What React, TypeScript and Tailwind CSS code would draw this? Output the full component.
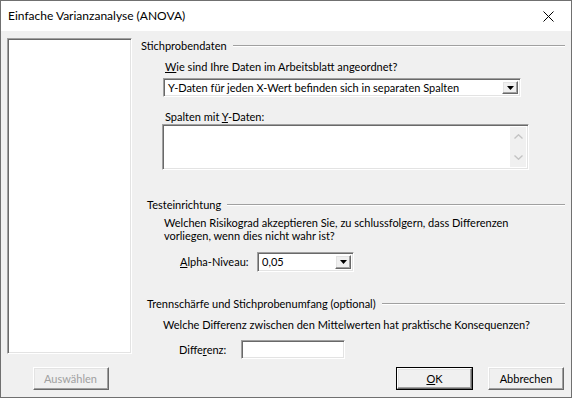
import React from "react";

const sunken =
  "border border-t-[#a0a0a0] border-l-[#a0a0a0] border-r-white border-b-white shadow-[inset_1px_1px_0_#696969,inset_-1px_-1px_0_#e3e3e3]";

const raised =
  "border border-t-white border-l-white border-r-[#696969] border-b-[#696969] shadow-[inset_-1px_-1px_0_#a0a0a0,inset_1px_1px_0_#e3e3e3]";

const GroupHeader = ({ title, className = "" }: { title: string; className?: string }) => (
  <div className={`flex items-center h-[16px] ${className}`}>
    <span className="whitespace-nowrap">{title}</span>
    <div className="flex-1 ml-[6px] border-t border-t-[#a0a0a0] border-b border-b-white" />
  </div>
);

const DropArrow = () => (
  <div className={`w-[16px] h-full bg-[#f0f0f0] flex items-center justify-center ${raised}`}>
    <svg width="7" height="4" viewBox="0 0 7 4">
      <path d="M0 0h7L3.5 4z" fill="#000" />
    </svg>
  </div>
);

const Combo = ({ value, className = "" }: { value: string; className?: string }) => (
  <div className={`flex items-stretch bg-white p-[2px] ${sunken} ${className}`}>
    <div className="flex-1 flex items-center pl-[2px] whitespace-nowrap overflow-hidden">{value}</div>
    <DropArrow />
  </div>
);

export default function App() {
  return (
    <div
      className="w-[572px] h-[398px] border border-[#707070] flex flex-col text-[11px] leading-[14px] text-black"
      style={{ fontFamily: "Lato, 'Noto Sans', sans-serif" }}
    >
      {/* title bar */}
      <div className="h-[30px] bg-white flex items-center justify-between shrink-0">
        <span className="pl-[7px] text-[12px]">Einfache Varianzanalyse (ANOVA)</span>
        <div className="w-[46px] h-full flex items-center justify-center">
          <svg width="11" height="11" viewBox="0 0 11 11">
            <path d="M0.5 0.5L10.5 10.5M10.5 0.5L0.5 10.5" stroke="#000" strokeWidth="1" />
          </svg>
        </div>
      </div>

      <div className="flex-1 bg-[#f0f0f0] flex">
        {/* left column */}
        <div className="w-[134px] pl-[6px] pt-[7px] flex flex-col">
          <div className={`w-[125px] h-[316px] bg-white ${sunken}`} />
          <div className="flex justify-center mt-[13px] pr-[1px]">
            <div className={`w-[76px] h-[23px] flex items-center justify-center text-[#a0a0a0] ${raised}`}>
              Auswählen
            </div>
          </div>
        </div>

        {/* right column */}
        <div className="flex-1 pl-[6px] pr-[6px] pt-[7px] flex flex-col">
          <GroupHeader title="Stichprobendaten" />
          <div className="pl-[22px] flex flex-col">
            <div className="mt-[6px] pl-[2px]">
              <u>W</u>ie sind Ihre Daten im Arbeitsblatt angeordnet?
            </div>
            <Combo
              value="Y-Daten für jeden X-Wert befinden sich in separaten Spalten"
              className="mt-[4px] w-[358px] h-[19px]"
            />
            <div className="mt-[13px] pl-[2px]">
              Spalten mit <u>Y</u>-Daten:
            </div>
            <div className={`ml-[-1px] w-[367px] h-[46px] bg-white flex justify-end p-[2px] ${sunken}`}>
              <div className="w-[16px] h-full bg-[#f0f0f0] flex flex-col items-center justify-between py-[7px]">
                <svg width="9" height="5" viewBox="0 0 9 5">
                  <path d="M0.5 4.5L4.5 0.8L8.5 4.5" stroke="#c3c3c3" strokeWidth="1.4" fill="none" />
                </svg>
                <svg width="9" height="5" viewBox="0 0 9 5">
                  <path d="M0.5 0.5L4.5 4.2L8.5 0.5" stroke="#c3c3c3" strokeWidth="1.4" fill="none" />
                </svg>
              </div>
            </div>
          </div>

          <GroupHeader title="Testeinrichtung" className="mt-[27px] pl-[6px]" />
          <div className="pl-[23px] mt-[3px] leading-[13px]">
            Welchen Risikograd akzeptieren Sie, zu schlussfolgern, dass Differenzen
            <br />
            vorliegen, wenn dies nicht wahr ist?
          </div>
          <div className="pl-[39px] mt-[10px] flex items-center h-[20px]">
            <span className="w-[77px]">
              <u>A</u>lpha-Niveau:
            </span>
            <Combo value="0,05" className="w-[97px] h-[20px]" />
          </div>

          <GroupHeader title="Trennschärfe und Stichprobenumfang (optional)" className="mt-[24px] pl-[6px]" />
          <div className="pl-[22px] mt-[6px]">
            Welche Differenz zwischen den Mittelwerten hat praktische Konsequenzen?
          </div>
          <div className="pl-[38px] mt-[8px] flex items-center h-[19px]">
            <span className="w-[62px]">
              Diffe<u>r</u>enz:
            </span>
            <div className={`w-[104px] h-[19px] bg-white ${sunken}`} />
          </div>

          <div className="mt-[8px] flex justify-end gap-[15px] pr-[1px]">
            <div className="w-[77px] h-[23px] border border-black">
              <div className={`w-full h-full flex items-center justify-center ${raised}`}>
                <span>
                  <u>O</u>K
                </span>
              </div>
            </div>
            <div className={`w-[76px] h-[23px] flex items-center justify-center ${raised}`}>Abbrechen</div>
          </div>
        </div>
      </div>
    </div>
  );
}
